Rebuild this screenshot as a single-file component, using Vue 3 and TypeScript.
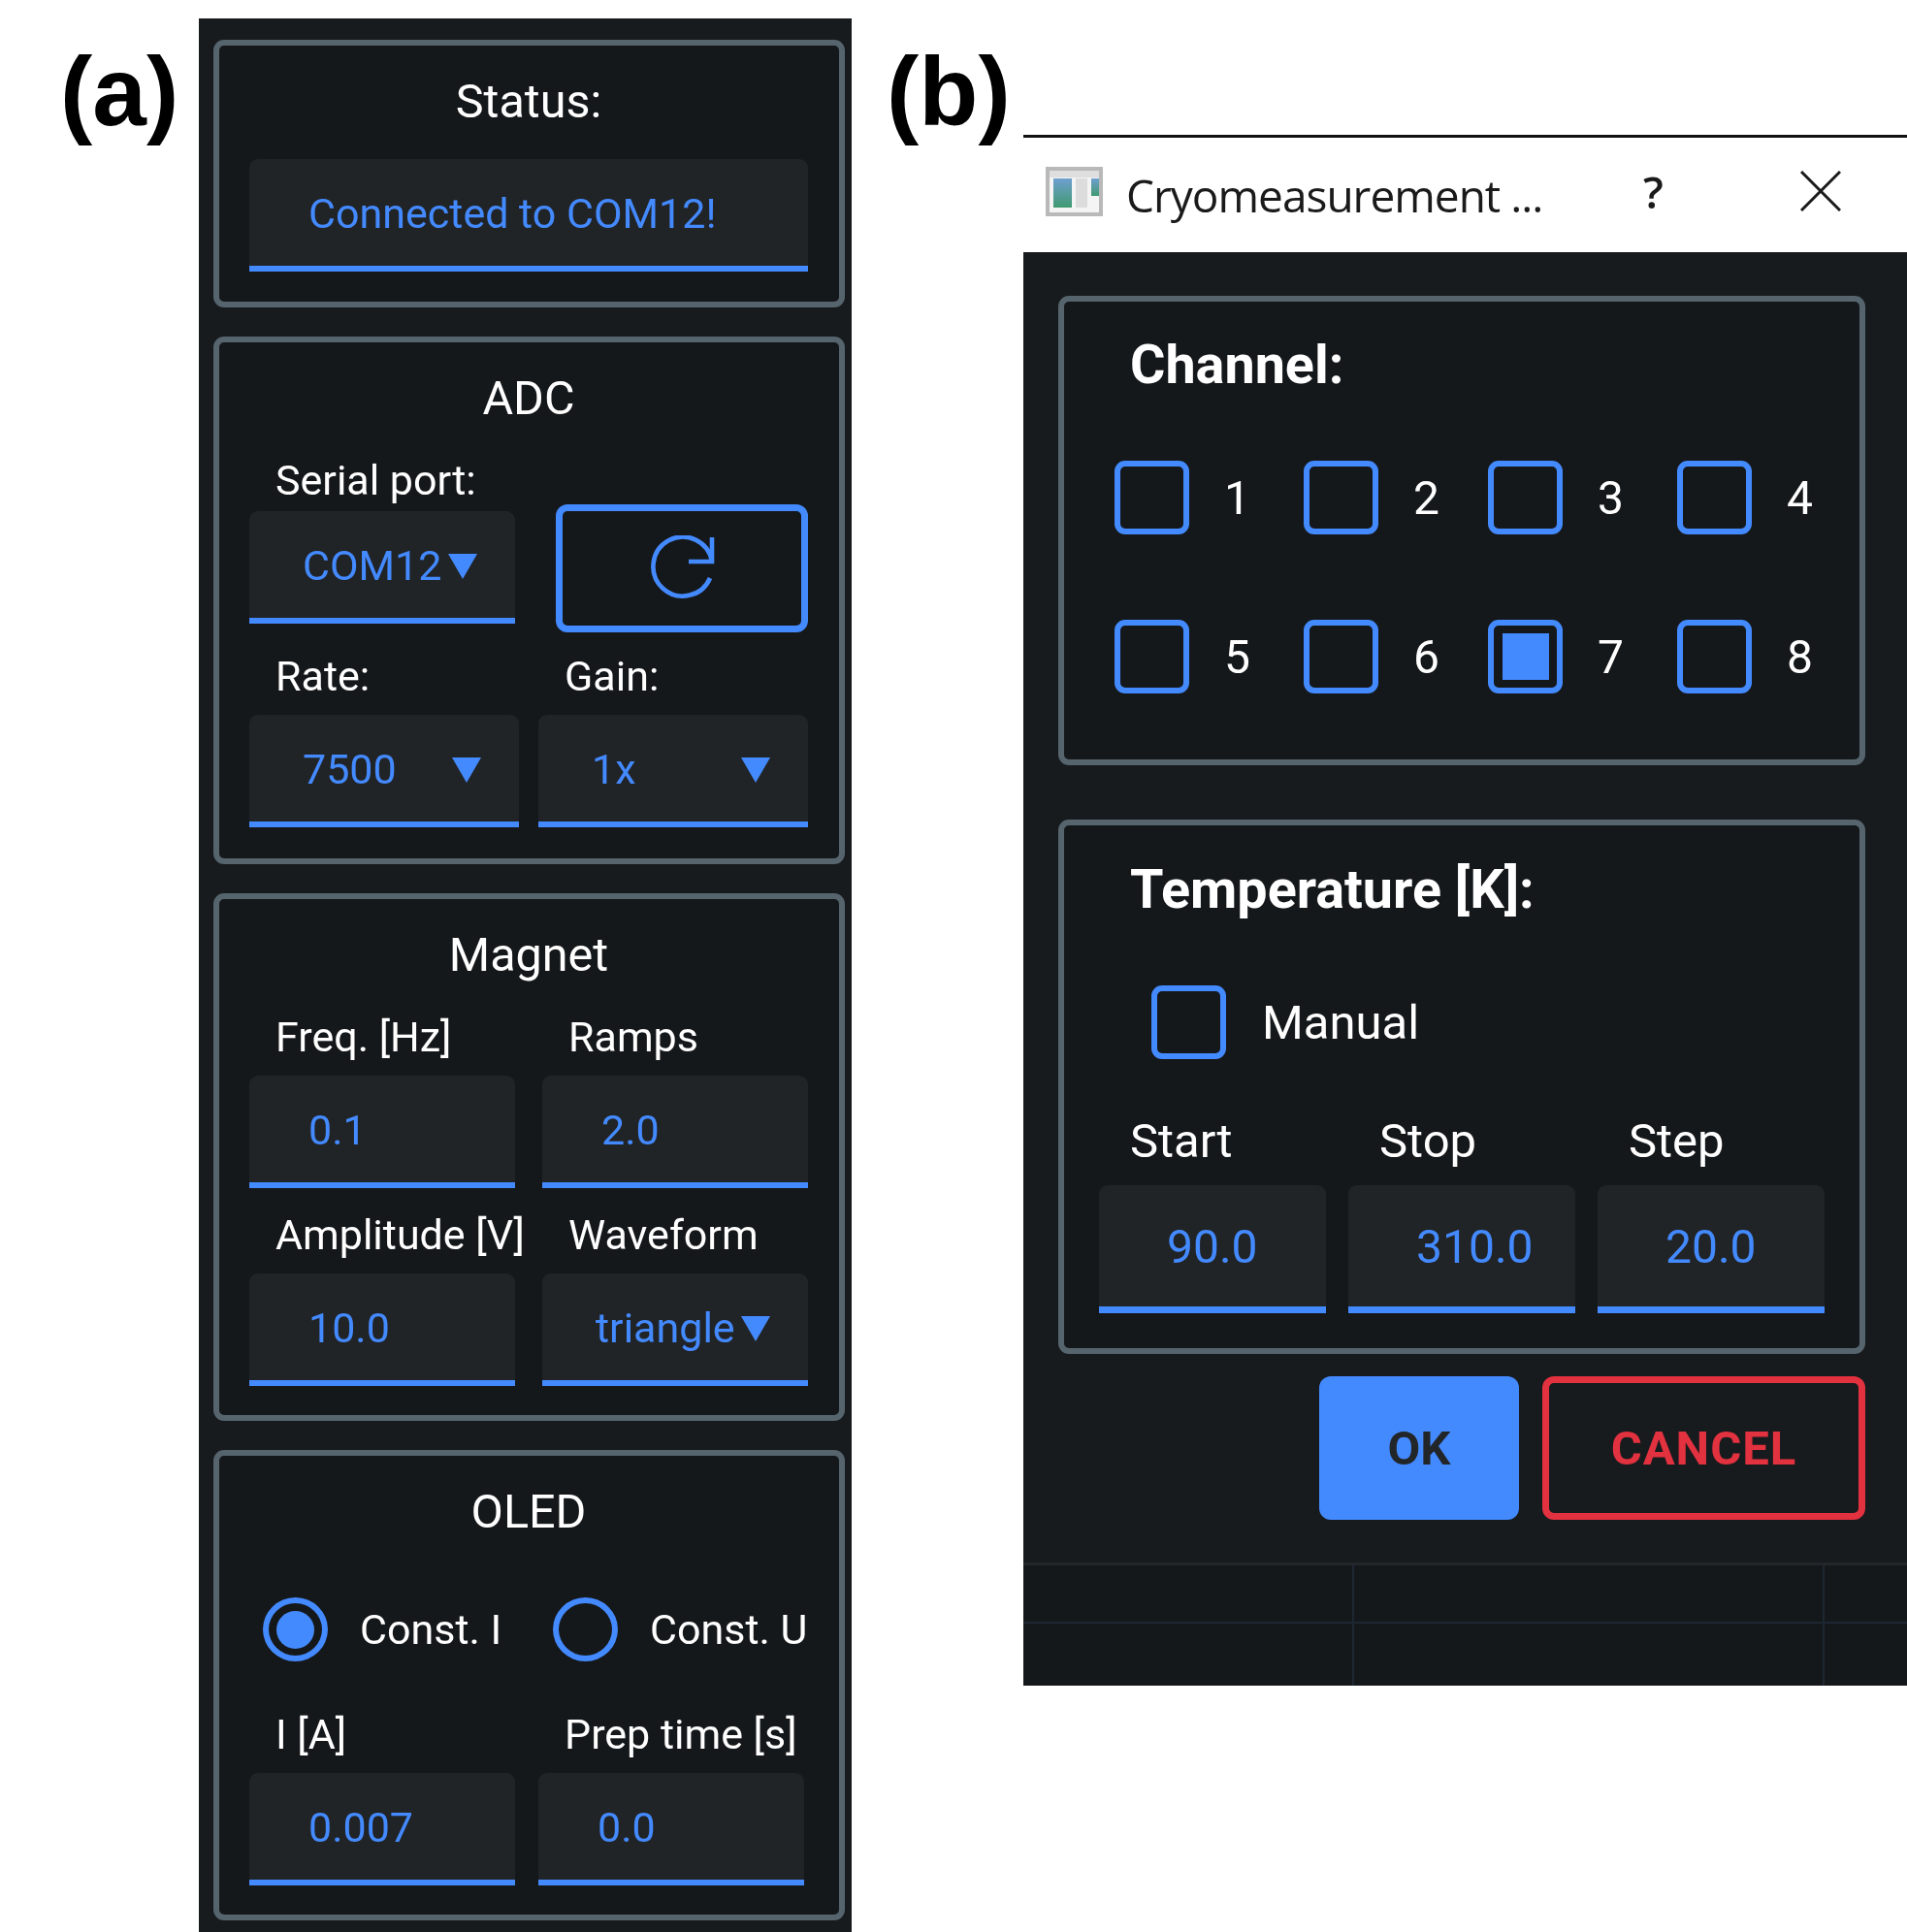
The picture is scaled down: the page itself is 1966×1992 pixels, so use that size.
<script setup lang="ts">
const channels: number[] = [1, 2, 3, 4, 5, 6, 7, 8]
const temps = [
  { label: 'Start', value: '90.0' },
  { label: 'Stop', value: '310.0' },
  { label: 'Step', value: '20.0' },
]
</script>

<template>
  <div class="page">
    <div class="tag tag-a">(a)</div>

    <div class="panel">
      <section class="group status">
        <div class="title">Status:</div>
        <div class="field status-field">Connected to COM12!</div>
      </section>

      <section class="group tall">
        <div class="title">ADC</div>
        <div class="row r-adc1 after-title">
          <div>
            <div class="label tight">Serial port:</div>
            <div class="field combo narrow-pad">
              <span>COM12</span><i class="tri near"></i>
            </div>
          </div>
          <button class="refresh" type="button" aria-label="Refresh">
            <svg class="refresh-icon" viewBox="0 0 70 70" width="70" height="70" fill="none" stroke="#448aff" stroke-width="4.6">
              <path d="M66 2v25H42" />
              <path d="M64 44A30.500 30.500 0 1 1 66 27" />
            </svg>
          </button>
        </div>
        <div class="row r-adc2 second">
          <div>
            <div class="label">Rate:</div>
            <div class="field combo narrow-pad"><span>7500</span><i class="tri"></i></div>
          </div>
          <div>
            <div class="label">Gain:</div>
            <div class="field combo narrow-pad"><span>1x</span><i class="tri"></i></div>
          </div>
        </div>
      </section>

      <section class="group tall">
        <div class="title">Magnet</div>
        <div class="row r-mag after-title">
          <div>
            <div class="label">Freq. [Hz]</div>
            <div class="field">0.1</div>
          </div>
          <div>
            <div class="label">Ramps</div>
            <div class="field">2.0</div>
          </div>
        </div>
        <div class="row r-mag third">
          <div>
            <div class="label">Amplitude [V]</div>
            <div class="field">10.0</div>
          </div>
          <div>
            <div class="label">Waveform</div>
            <div class="field combo narrow-pad"><span>triangle</span><i class="tri near"></i></div>
          </div>
        </div>
      </section>

      <section class="group oled">
        <div class="title">OLED</div>
        <div class="radios">
          <div class="radio-item">
            <span class="radio on"><i></i></span><span>Const. I</span>
          </div>
          <div class="radio-item">
            <span class="radio"></span><span>Const. U</span>
          </div>
        </div>
        <div class="row r-oled below-radios">
          <div>
            <div class="label">I [A]</div>
            <div class="field">0.007</div>
          </div>
          <div>
            <div class="label">Prep time [s]</div>
            <div class="field">0.0</div>
          </div>
        </div>
      </section>
    </div>

    <div class="tag tag-b">(b)</div>

    <div class="window">
      <header class="titlebar">
        <svg class="app-icon" viewBox="0 0 59 51" width="59" height="51">
          <defs>
            <linearGradient id="icon-fill" x1="0" y1="0" x2="0" y2="1">
              <stop offset="0" stop-color="#6f9fd0" />
              <stop offset="1" stop-color="#3f9a70" />
            </linearGradient>
          </defs>
          <rect x="2" y="2" width="55" height="47" fill="#f4f4f4" stroke="#b9b9b9" stroke-width="4" />
          <rect x="4" y="4" width="51" height="7" fill="#dedede" />
          <rect x="8" y="12" width="19" height="30" fill="url(#icon-fill)" />
          <rect x="31" y="12" width="12" height="30" fill="#dcdcdc" />
          <rect x="47" y="12" width="8" height="18" fill="url(#icon-fill)" />
        </svg>
        <span class="win-title">Cryomeasurement ...</span>
        <span class="help">?</span>
        <svg class="close" viewBox="0 0 42 42" width="42" height="42" fill="none" stroke="#1a1a1a" stroke-width="3">
          <path d="M1 1l40 40M41 1L1 41" />
        </svg>
      </header>

      <div class="dialog">
        <div class="dialog-inner">
          <section class="group channel">
            <div class="heading">Channel:</div>
            <div class="channels">
              <div v-for="c in channels" :key="c" class="channel-item">
                <span class="check"><i v-if="c === 7"></i></span>
                <span>{{ c }}</span>
              </div>
            </div>
          </section>

          <section class="group temperature">
            <div class="heading">Temperature [K]:</div>
            <div class="manual">
              <span class="check"></span>
              <span>Manual</span>
            </div>
            <div class="temps">
              <div v-for="t in temps" :key="t.label">
                <div class="temp-label">{{ t.label }}</div>
                <div class="field temp-field">{{ t.value }}</div>
              </div>
            </div>
          </section>

          <div class="actions">
            <button class="btn ok" type="button">OK</button>
            <button class="btn cancel" type="button">CANCEL</button>
          </div>
        </div>

        <div class="table-stub">
          <div v-for="n in 6" :key="n" class="cell"></div>
        </div>
      </div>
    </div>
  </div>
</template>

<style>
html,
body {
  margin: 0;
  background: #fff;
}
</style>

<style scoped>
.page {
  width: 1966px;
  height: 1992px;
  display: flex;
  align-items: flex-start;
  overflow: hidden;
  background: #fff;
  font-family: Roboto, "Liberation Sans", sans-serif;
  font-size: 43px;
  color: #fff;
  filter: blur(0.7px);
}

.tag {
  font-family: "Liberation Sans", Arial, sans-serif;
  font-weight: 700;
  font-size: 100px;
  line-height: 110px;
  color: #000;
  flex: none;
}
.tag-a {
  width: 143px;
  margin: 39px 0 0 62px;
}
.tag-b {
  width: 141px;
  margin: 39px 0 0 36px;
}

.panel {
  flex: none;
  width: 673px;
  height: 1973px;
  margin-top: 19px;
  box-sizing: border-box;
  padding: 22px 0 0 15px;
  background: #181b1e;
  display: flex;
  flex-direction: column;
  gap: 30px;
}

.group {
  box-sizing: border-box;
  border: 6px solid #55646d;
  border-radius: 11px;
  background: #15181b;
}
.panel .group {
  width: 651px;
  padding: 27px 32px 0 31px;
}
.status {
  height: 276px;
}
.tall {
  height: 544px;
}
.oled {
  height: 485px;
}

.title {
  height: 60px;
  line-height: 62px;
  text-align: center;
  font-size: 48.5px;
}
.status .title {
  margin-bottom: 30px;
}

.label {
  height: 50px;
  line-height: 52px;
  padding-left: 27px;
  margin-bottom: 16px;
  white-space: nowrap;
}
.label.tight {
  margin-bottom: 8px;
}

.field {
  box-sizing: border-box;
  height: 116px;
  display: flex;
  align-items: center;
  padding: 2px 39px 0 61px;
  background: #212427;
  border-bottom: 6px solid #448aff;
  border-radius: 9px 9px 0 0;
  color: #448aff;
  font-size: 43px;
  white-space: nowrap;
}
.combo.narrow-pad {
  padding-left: 55px;
  justify-content: space-between;
}
.tri {
  flex: none;
  width: 0;
  height: 0;
  margin-top: 1px;
  border-left: 15px solid transparent;
  border-right: 15px solid transparent;
  border-top: 26px solid #448aff;
}
.tri.near {
  margin-left: -4px;
}

.row {
  display: grid;
}
.after-title {
  margin-top: 29px;
}
.r-adc1 {
  grid-template-columns: 274px 260px;
  column-gap: 42px;
}
.r-adc2 {
  grid-template-columns: 278px 278px;
  column-gap: 20px;
}
.second {
  margin-top: 28px;
}
.r-mag {
  grid-template-columns: 274px 274px;
  column-gap: 28px;
}
.third {
  margin-top: 22px;
}
.r-oled {
  grid-template-columns: 274px 274px;
  column-gap: 24px;
}
.below-radios {
  margin-top: 49px;
}

.refresh {
  align-self: end;
  margin-bottom: -9px;
  height: 132px;
  box-sizing: border-box;
  padding: 0;
  display: flex;
  align-items: center;
  justify-content: center;
  background: transparent;
  border: 7px solid #448aff;
  border-radius: 12px;
}
.refresh-icon {
  margin-top: 2px;
}

.radios {
  display: grid;
  grid-template-columns: 299px auto;
  margin: 59px 0 0 14px;
}
.radio-item {
  display: flex;
  align-items: center;
  gap: 33px;
  white-space: nowrap;
}
.radio {
  flex: none;
  box-sizing: border-box;
  width: 67px;
  height: 66px;
  border: 6px solid #448aff;
  border-radius: 50%;
  display: flex;
  align-items: center;
  justify-content: center;
}
.radio i {
  width: 39px;
  height: 39px;
  border-radius: 50%;
  background: #448aff;
}

.window {
  flex: none;
  width: 911px;
  margin-top: 139px;
  border-top: 3px solid #111;
  background: #fff;
}
.titlebar {
  height: 118px;
  display: flex;
  align-items: center;
  padding-left: 23px;
  color: #1a1a1a;
  font-family: "Open Sans", "Noto Sans", sans-serif;
  font-size: 46px;
}
.app-icon {
  flex: none;
  margin-top: -8px;
}
.win-title {
  margin-left: 24px;
  width: 533px;
  white-space: nowrap;
  letter-spacing: -1px;
}
.help {
  width: 162px;
  font-weight: 600;
  margin-top: -8px;
}
.close {
  margin-top: -8px;
}

.dialog {
  height: 1478px;
  background: #181b1e;
  display: flex;
  flex-direction: column;
}
.dialog-inner {
  width: 832px;
  margin-left: 36px;
  padding-top: 45px;
}
.heading {
  height: 70px;
  line-height: 70px;
  padding-left: 68px;
  font-size: 55.7px;
  font-weight: 700;
}

.channel {
  height: 484px;
  padding-top: 30px;
}
.channels {
  display: grid;
  grid-template-columns: 195px 190px 195px auto;
  row-gap: 88px;
  margin: 64px 0 0 52px;
}
.channel-item {
  display: flex;
  align-items: center;
  gap: 36px;
  font-size: 48px;
}
.check {
  flex: none;
  box-sizing: border-box;
  width: 77px;
  height: 76px;
  border: 6px solid #448aff;
  border-radius: 11px;
  display: flex;
  align-items: center;
  justify-content: center;
}
.check i {
  width: 48px;
  height: 48px;
  background: #448aff;
}

.temperature {
  height: 551px;
  margin-top: 56px;
  padding-top: 31px;
}
.manual {
  display: flex;
  align-items: center;
  gap: 37px;
  margin: 64px 0 0 90px;
  font-size: 49px;
}
.temps {
  display: grid;
  grid-template-columns: repeat(3, 234px);
  column-gap: 23px;
  margin: 56px 0 0 36px;
}
.temp-label {
  height: 56px;
  line-height: 58px;
  padding-left: 32px;
  margin-bottom: 18px;
  font-size: 49px;
}
.temp-field {
  height: 132px;
  padding-left: 70px;
  font-size: 48px;
  border-bottom-width: 7px;
}

.actions {
  display: flex;
  justify-content: flex-end;
  gap: 24px;
  margin-top: 23px;
}
.btn {
  box-sizing: border-box;
  height: 148px;
  padding: 0;
  font-family: Roboto, "Liberation Sans", sans-serif;
  font-size: 49px;
  font-weight: 700;
  border-radius: 12px;
}
.ok {
  width: 206px;
  background: #448aff;
  border: none;
  color: #232629;
}
.cancel {
  width: 333px;
  background: transparent;
  border: 7px solid #e2313f;
  color: #e2313f;
  letter-spacing: 1px;
}

.table-stub {
  margin-top: 44px;
  flex: 1;
  display: grid;
  grid-template-columns: 341px 485px 1fr;
  grid-template-rows: 60px 1fr;
  border-top: 3px solid #22262a;
  background: #15181b;
}
.cell {
  box-sizing: border-box;
  border-right: 2px solid #1d2731;
}
.cell:nth-child(-n + 3) {
  border-bottom: 2px solid #1d2731;
}
.cell:nth-child(3n) {
  border-right: none;
}
</style>
